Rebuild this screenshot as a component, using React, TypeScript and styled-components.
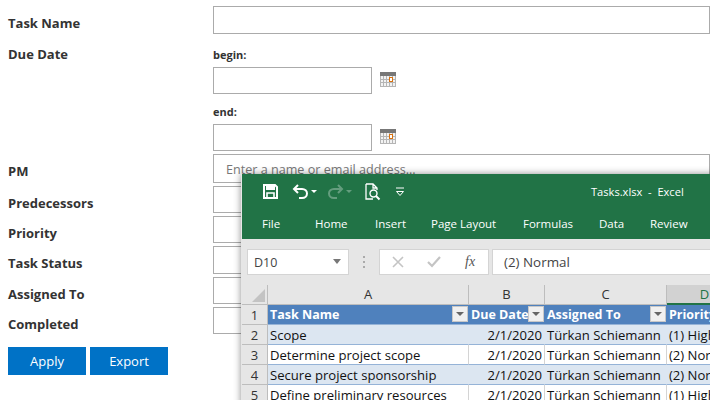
import React from "react";
import styled, { createGlobalStyle } from "styled-components";

const Global = createGlobalStyle`
  html, body { margin: 0; padding: 0; background: #fff; width: 710px; height: 400px; overflow: hidden; }
  * { box-sizing: border-box; }
`;
const Page = styled.div`
  position: relative; width: 710px; height: 400px; overflow: hidden;
  font-family: "Open Sans", "Noto Sans", sans-serif; color: #333;
`;
const Form = styled.div`
  display: grid; grid-template-columns: 205px 1fr; padding: 6px 0 0 8px;
`;
const Label = styled.div<{ $h: number; $lh: number }>`
  height: ${p => p.$h}px; font-size: 13px; font-weight: 700; line-height: ${p => p.$lh}px; color: #333;
`;
const Field = styled.div<{ $h: number }>`
  height: ${p => p.$h}px; border: 1px solid #ababab; background: #fff;
  font-size: 12.6px; line-height: ${p => p.$h}px; padding-left: 12px; color: #777; white-space: nowrap; overflow: hidden;
`;
const DateGroup = styled.div`
  display: flex; flex-direction: column; height: 114px; padding-top: 6px;
`;
const SubLabel = styled.div`
  font-size: 11px; font-weight: 700; line-height: 18px; height: 20px; color: #333; flex: none;
`;
const DateRow = styled.div`
  display: flex; align-items: center; gap: 8px; height: 28px; margin-bottom: 9px; flex: none;
  &:last-child { margin-bottom: 0; }
`;
const DateBox = styled.div`
  width: 159px; height: 27px; border: 1px solid #ababab;
`;
const Actions = styled.div`
  grid-column: 1 / 3; display: flex; gap: 4px; margin-top: 12px;
`;
const Button = styled.div`
  width: 78px; height: 28px; background: #0072c6; color: #fff; font-size: 13px;
  display: flex; align-items: center; justify-content: center;
`;
const Excel = styled.div`
  position: absolute; left: 241px; top: 174px; width: 480px; height: 240px;
  background: #e6e6e6; box-shadow: 0 0 7px rgba(0,0,0,.45); display: flex; flex-direction: column;
  border-left: 1px solid #e6e6e6;
`;
const TitleBar = styled.div`
  background: #217346; height: 65px; flex: none; color: #fff; display: flex; flex-direction: column;
`;
const Qat = styled.div`
  height: 35px; flex: none; display: flex; align-items: center; padding-left: 21px; position: relative;
`;
const QatIcon = styled.svg<{ $ml?: number }>`
  display: block; margin-left: ${p => p.$ml ?? 0}px; flex: none;
`;
const WindowTitle = styled.div`
  position: absolute; left: 349px; top: 9px; font-size: 11.1px; line-height: 18px; white-space: pre;
`;
const Tabs = styled.div`
  display: flex; height: 29px; font-size: 11.5px; align-items: center; line-height: 18px; padding-left: 20px; color: #fff;
`;
const Tab = styled.span<{ $w: number }>`
  width: ${p => p.$w}px; flex: none; white-space: nowrap;
`;
const FormulaBar = styled.div`
  height: 46px; flex: none; display: flex; align-items: flex-start; padding: 10px 0 0 5px;
`;
const NameBox = styled.div`
  width: 102px; height: 26px; background: #fff; border: 1px solid #d4d4d4; color: #444; font-size: 12.5px;
  line-height: 25px; padding-left: 6px; position: relative;
`;
const Caret = styled.span`
  position: absolute; right: 7px; top: 9px; width: 0; height: 0;
  border-left: 4px solid transparent; border-right: 4px solid transparent; border-top: 5px solid #777;
`;
const Grip = styled.div`
  width: 2px; height: 12px; margin: 7px 14px 0 14px; flex: none;
  background: repeating-linear-gradient(#aaa 0 2px, transparent 2px 5px);
`;
const FxBox = styled.div`
  width: 110px; height: 26px; background: #fff; border: 1px solid #d4d4d4; display: flex; align-items: center;
  padding-left: 12px; flex: none; margin-right: 3px;
`;
const CancelIcon = styled.svg`
  display: block; flex: none;
`;
const EnterIcon = styled.svg`
  display: block; flex: none; margin-left: 23px;
`;
const Fx = styled.span`
  font-family: "Liberation Serif", serif; font-style: italic; font-size: 14px; color: #555; margin-left: 24px;
`;
const FormulaInput = styled.div`
  flex: 1; height: 26px; background: #fff; border: 1px solid #d4d4d4; font-size: 13.4px; line-height: 25px; padding-left: 11px;
  color: #444;
`;
const Sheet = styled.div`
  display: grid; grid-template-columns: 26px 201px 76px 122px 76px; grid-template-rows: repeat(6, 20px); background: #fff; flex: 1;
  font-size: 13.1px; color: #111;
`;
const ColHead = styled.div<{ $sel?: boolean }>`
  background: ${p => p.$sel ? "#d2d2d2" : "#e6e6e6"}; text-align: center; font-size: 13px; line-height: 19px;
  color: ${p => p.$sel ? "#217346" : "#333"}; border-right: 1px solid #bdbdbd;
  border-bottom: ${p => p.$sel ? "2px solid #217346" : "1px solid #bdbdbd"};
`;
const Corner = styled.div`
  background: #e6e6e6; border-right: 1px solid #bdbdbd; border-bottom: 1px solid #bdbdbd; position: relative;
  &::after { content: ""; position: absolute; right: 2px; bottom: 2px; width: 0; height: 0;
    border-left: 13px solid transparent; border-bottom: 13px solid #c3c3c3; }
`;
const RowHead = styled.div`
  background: #e6e6e6; text-align: center; font-size: 13px; line-height: 20px; color: #333;
  border-right: 1px solid #bdbdbd; border-bottom: 1px solid #bdbdbd;
`;
const HeadCell = styled.div`
  background: #4f81bd; color: #fff; font-weight: 700; font-size: 12.5px; line-height: 20px; padding-left: 2px; position: relative;
  white-space: nowrap; overflow: hidden; border-bottom: 1px solid #95b3d7;
`;
const Filter = styled.span`
  position: absolute; right: 1px; top: 1px; width: 16px; height: 16px; background: #f0f0f0; border: 1px solid #c8c8c8;
  &::after { content: ""; position: absolute; left: 3px; top: 5px; width: 0; height: 0;
    border-left: 4px solid transparent; border-right: 4px solid transparent; border-top: 4px solid #666; }
`;
const Cell = styled.div<{ $band: boolean; $right?: boolean }>`
  background: ${p => p.$band ? "#dce6f1" : "#fff"}; line-height: 20px; padding: 0 2px; white-space: nowrap; overflow: hidden;
  text-align: ${p => p.$right ? "right" : "left"}; border-bottom: 1px solid #95b3d7;
  border-right: 1px solid ${p => p.$band ? "transparent" : "#d4d4d4"};
`;

const rows = [
  ["Scope", "(1) High"],
  ["Determine project scope", "(2) Normal"],
  ["Secure project sponsorship", "(2) Normal"],
  ["Define preliminary resources", "(1) High"],
];
const labels: [string, number, number, number][] = [
  ["Predecessors", 30, 34, 27],
  ["Priority", 30, 34, 27],
  ["Task Status", 31, 34, 28],
  ["Assigned To", 30, 34, 27],
  ["Completed", 28, 34, 27],
];

const CalendarIcon = () => (
  <svg width="16" height="16" viewBox="0 0 16 16" shapeRendering="crispEdges">
    <rect x="0" y="0" width="16" height="15" fill="#f2f2f2" />
    <rect x="0" y="0" width="16" height="4" fill="#777" />
    <path d="M0.5 4v11M15.5 4v11M3.5 4v11M6.5 4v11M9.5 4v11M12.5 4v11M0 7.5h16M0 10.5h16M0 14.5h16" fill="none" stroke="#b5b5b5" strokeWidth="1" />
    <rect x="9.5" y="5.5" width="3" height="4" fill="#fff" stroke="#d9720f" strokeWidth="1" />
  </svg>
);

export default function App() {
  return (
    <Page>
      <Global />
      <Form>
        <Label $h={34} $lh={34}>Task Name</Label>
        <Field $h={28}></Field>
        <Label $h={28} $lh={28}>Due Date</Label>
        <DateGroup>
          <SubLabel>begin:</SubLabel>
          <DateRow><DateBox /><CalendarIcon /></DateRow>
          <SubLabel>end:</SubLabel>
          <DateRow><DateBox /><CalendarIcon /></DateRow>
        </DateGroup>
        <Label $h={32} $lh={34}>PM</Label>
        <Field $h={29}>Enter a name or email address...</Field>
        {labels.map(([t, h, lh, fh]) => (
          <React.Fragment key={t}>
            <Label $h={h} $lh={lh}>{t}</Label>
            <Field $h={fh} />
          </React.Fragment>
        ))}
        <Actions>
          <Button>Apply</Button>
          <Button>Export</Button>
        </Actions>
      </Form>
      <Excel>
        <TitleBar>
          <Qat>
            <QatIcon width="15" height="15" viewBox="0 0 15 15">
              <path d="M1 1h11l2 2v11H1z" fill="none" stroke="#fff" strokeWidth="2" />
              <rect x="3" y="1" width="9" height="5" fill="#fff" />
              <path d="M4 14v-5h7v5" fill="none" stroke="#fff" strokeWidth="1.6" />
            </QatIcon>
            <QatIcon $ml={14} width="26" height="16" viewBox="0 0 26 16">
              <path d="M6 1 2 5l4 4M2 5h8c3 0 5 2 5 4.5S13 14 10 14H7" fill="none" stroke="#fff" strokeWidth="2" />
              <path d="M19 6h6l-3 3z" fill="#fff" />
            </QatIcon>
            <QatIcon $ml={9} width="26" height="16" viewBox="0 0 26 16" opacity="0.3">
              <path d="M11 1l4 4-4 4M15 5H7C4 5 2 7 2 9.5S4 14 7 14h3" fill="none" stroke="#fff" strokeWidth="2" />
              <path d="M19 6h6l-3 3z" fill="#fff" />
            </QatIcon>
            <QatIcon $ml={12} width="16" height="18" viewBox="0 0 16 18">
              <path d="M1 1h7l4 4v2M8 1v4h4M1 1v15h7" fill="none" stroke="#fff" strokeWidth="1.3" />
              <circle cx="8.5" cy="10.5" r="3.5" fill="none" stroke="#fff" strokeWidth="1.4" />
              <path d="M11 13l3.5 3.5" stroke="#fff" strokeWidth="2" />
            </QatIcon>
            <QatIcon $ml={14} width="10" height="10" viewBox="0 0 10 10">
              <path d="M1 1h8M1.5 4.5h7L5 8.5z" fill="none" stroke="#fff" strokeWidth="1" />
            </QatIcon>
            <WindowTitle>Tasks.xlsx  -  Excel</WindowTitle>
          </Qat>
          <Tabs>
            <Tab $w={53}>File</Tab>
            <Tab $w={60}>Home</Tab>
            <Tab $w={56}>Insert</Tab>
            <Tab $w={92}>Page Layout</Tab>
            <Tab $w={76}>Formulas</Tab>
            <Tab $w={51}>Data</Tab>
            <Tab $w={50}>Review</Tab>
          </Tabs>
        </TitleBar>
        <FormulaBar>
          <NameBox>D10<Caret /></NameBox>
          <Grip />
          <FxBox>
            <CancelIcon width="12" height="12" viewBox="0 0 12 12"><path d="M1 1l10 10M11 1 1 11" stroke="#c4c4c4" strokeWidth="1.6" /></CancelIcon>
            <EnterIcon width="14" height="12" viewBox="0 0 14 12"><path d="M1 6l4 4 8-9" fill="none" stroke="#c4c4c4" strokeWidth="2.2" /></EnterIcon>
            <Fx>fx</Fx>
          </FxBox>
          <FormulaInput>(2) Normal</FormulaInput>
        </FormulaBar>
        <Sheet>
          <Corner />
          <ColHead>A</ColHead>
          <ColHead>B</ColHead>
          <ColHead>C</ColHead>
          <ColHead $sel>D</ColHead>
          <RowHead>1</RowHead>
          <HeadCell>Task Name<Filter /></HeadCell>
          <HeadCell>Due Date<Filter /></HeadCell>
          <HeadCell>Assigned To<Filter /></HeadCell>
          <HeadCell>Priority</HeadCell>
          {rows.map((r, i) => {
            const band = i % 2 === 0;
            return (
              <React.Fragment key={r[0]}>
                <RowHead>{i + 2}</RowHead>
                <Cell $band={band}>{r[0]}</Cell>
                <Cell $band={band} $right>2/1/2020</Cell>
                <Cell $band={band}>Türkan Schiemann</Cell>
                <Cell $band={band}>{r[1]}</Cell>
              </React.Fragment>
            );
          })}
        </Sheet>
      </Excel>
    </Page>
  );
}
